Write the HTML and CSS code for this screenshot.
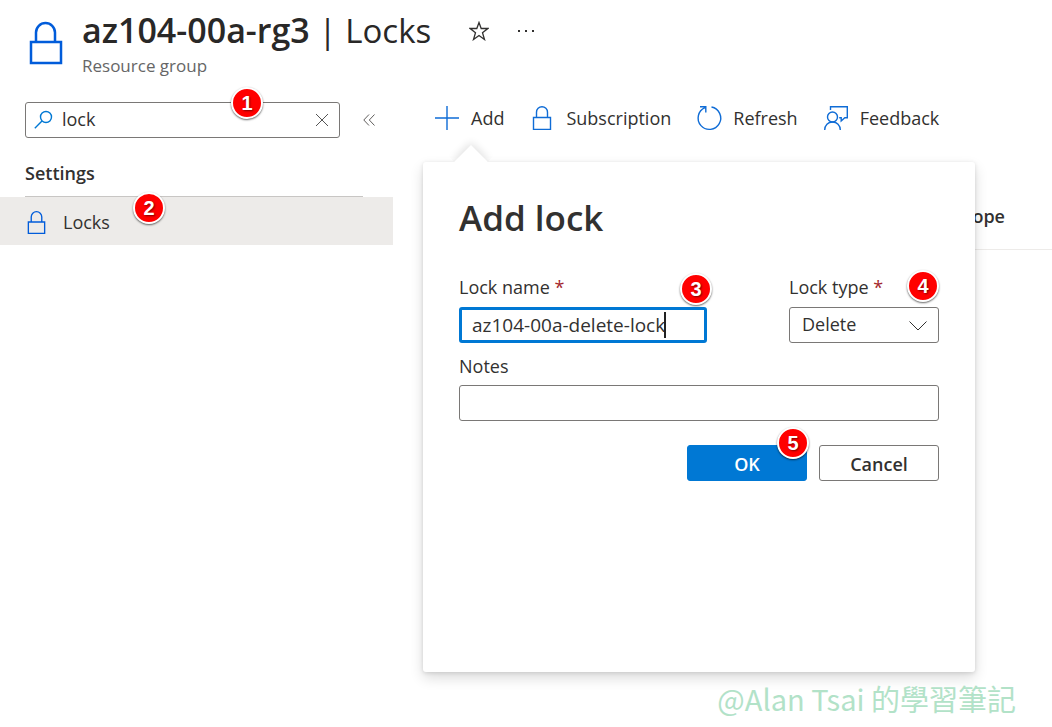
FILE: index.html
```html
<!DOCTYPE html>
<html lang="en">
<head>
<meta charset="utf-8">
<meta name="viewport" content="width=device-width, initial-scale=1">
<title>az104-00a-rg3 | Locks</title>
<link rel="stylesheet" href="styles.css">
</head>
<body>
<svg class="sprite" aria-hidden="true">
  <symbol id="lock" viewBox="0 0 24 24"><path d="M3.500 11.500h17v12h-17zM6.500 11V6.200a5.500 5.500 0 0 1 11 0V11"/></symbol>
</svg>
<div class="page">
  <header class="header">
    <svg class="header-icon" viewBox="0 0 34 44" aria-hidden="true"><path d="M2 21h30v21H2zM7 21V11.500a9.500 9.500 0 0 1 19 0V21"/></svg>
    <div class="heading">
      <div class="title-row">
        <h1 class="title">az104-00a-rg3 <span class="title-section">| Locks</span></h1>
        <button class="icon-button" type="button" aria-label="Add to favorites">
          <svg class="star" viewBox="0 0 20 20" aria-hidden="true"><path d="M10 1.500l2.200 6h6.600l-5.300 4.200 2 6.800-5.500-4-5.500 4 2-6.800L1.200 7.500h6.600z"/></svg>
        </button>
        <button class="icon-button more" type="button" aria-label="More">
          <svg class="dots" viewBox="0 0 18 4" aria-hidden="true"><path d="M1 1h2v2H1zM8 1h2v2H8zM15 1h2v2h-2z"/></svg>
        </button>
      </div>
      <p class="subtitle">Resource group</p>
    </div>
  </header>

  <div class="content">
    <nav class="sidebar" aria-label="Resource menu">
      <div class="search-row">
        <div class="search">
          <svg class="search-icon" viewBox="0 0 20 20" aria-hidden="true"><circle cx="12" cy="7" r="5.500"/><path d="M8 11L.8 18.200"/></svg>
          <input class="search-input" type="text" value="lock" aria-label="Search">
          <button class="clear" type="button" aria-label="Clear search"><svg viewBox="0 0 14 14" aria-hidden="true"><path d="M1 1l12 12M13 1L1 13"/></svg></button>
          <span class="badge badge-search">1</span>
        </div>
        <button class="collapse" type="button" aria-label="Collapse menu"><svg viewBox="0 0 12 12" aria-hidden="true"><path d="M6 .5L.8 6 6 11.500M11.500 .5L6.300 6l5.200 5.500"/></svg></button>
      </div>
      <h2 class="group-title">Settings</h2>
      <a class="nav-item" href="#locks" aria-current="page">
        <svg class="icon nav-icon" aria-hidden="true"><use href="#lock"/></svg>
        <span class="nav-label">Locks</span>
        <span class="badge badge-nav">2</span>
      </a>
    </nav>

    <main class="main">
      <div class="toolbar">
        <button class="command" type="button"><svg class="icon" viewBox="0 0 24 24" aria-hidden="true"><path d="M12 0v24M0 12h24"/></svg>Add</button>
        <button class="command" type="button"><svg class="icon" aria-hidden="true"><use href="#lock"/></svg>Subscription</button>
        <button class="command" type="button"><svg class="icon" viewBox="0 0 24 24" aria-hidden="true"><path d="M14.500 1A11.300 11.300 0 1 1 8 1.700M3 .8h5.800v5.700"/></svg>Refresh</button>
        <button class="command" type="button"><svg class="icon" viewBox="0 0 24 24" aria-hidden="true"><circle cx="8.500" cy="11" r="5"/><path d="M.7 24c0-4.700 3.400-8 7.800-8s7.800 3.300 7.800 8M6.500 4V.7h16.800v11h-2.500L17.200 15v-3.300h-2"/></svg>Feedback</button>
      </div>
      <table class="locks">
        <thead><tr><th class="scope" scope="col">Scope</th></tr></thead>
      </table>

      <form class="callout" aria-labelledby="callout-title">
        <h2 class="callout-title" id="callout-title">Add lock</h2>
        <div class="fields">
          <div class="field field-name">
            <label class="label" for="name">Lock name <span class="required">*</span></label>
            <div class="name-box">
              <input class="name-input" id="name" type="text" value="az104-00a-delete-lock" required>
              <span class="caret"></span>
            </div>
            <span class="badge badge-name">3</span>
          </div>
          <div class="field field-type">
            <label class="label" for="type">Lock type <span class="required">*</span></label>
            <div class="select-wrap">
              <select class="control select" id="type"><option>Delete</option><option>Read-only</option></select>
              <svg class="chevron" viewBox="0 0 18 10" aria-hidden="true"><path d="M.5 .5L9 9 17.500 .5"/></svg>
            </div>
            <span class="badge badge-type">4</span>
          </div>
        </div>
        <div class="field">
          <label class="label label-notes" for="notes">Notes</label>
          <input class="control" id="notes" type="text">
        </div>
        <div class="actions">
          <button class="button primary" type="button">OK<span class="badge badge-ok" aria-hidden="true">5</span></button>
          <button class="button" type="button">Cancel</button>
        </div>
      </form>
    </main>
  </div>
  <p class="watermark">@Alan Tsai 的學習筆記</p>
</div>
</body>
</html>
```
FILE: styles.css
```css
* { box-sizing: border-box; }
body {
  margin: 0;
  background: #fff;
  color: #323130;
  font: 18px/24px "Open Sans", "Noto Sans", sans-serif;
}
h1, h2, p { margin: 0; }
button, input, select { font: inherit; color: inherit; }
button { background: none; border: 0; padding: 0; }
input { outline: 0; }
svg { display: block; fill: none; stroke: currentColor; }
.sprite { position: absolute; width: 0; height: 0; }

.page { position: relative; min-height: 100vh; overflow: hidden; }

.header { display: flex; gap: 19px; padding: 8px 29px 0; height: 102px; }
.header-icon { width: 34px; height: 44px; margin-top: 13px; stroke: #015cda; stroke-width: 2.5; }
.title-row { display: flex; align-items: center; height: 44px; }
.title { font-size: 34px; line-height: 44px; font-weight: 600; color: #292827; white-space: nowrap; }
.title-section { font-size: 33px; font-weight: 400; }
.icon-button { display: flex; margin-left: 38px; padding-top: 2px; }
.more { margin-left: 28px; }
.star { width: 20px; height: 20px; stroke-width: 1.3; }
.dots { width: 18px; height: 4px; fill: currentColor; stroke: none; }
.subtitle { font-size: 17px; line-height: 28px; color: #666; }

.content { display: flex; }
.sidebar { flex: 0 0 393px; }
.search-row { display: flex; align-items: center; gap: 23px; padding-left: 25px; }
.search {
  position: relative;
  display: flex;
  align-items: center;
  gap: 8px;
  width: 315px;
  height: 36px;
  padding: 0 10px 0 8px;
  border: 1px solid #7a7876;
  border-radius: 3px;
}
.search-icon { flex: none; width: 20px; height: 20px; stroke: #0078d4; stroke-width: 1.4; }
.search-input { flex: 1; min-width: 0; border: 0; padding: 0 0 2px; background: none; }
.clear svg { width: 14px; height: 14px; stroke: #555; }
.collapse svg { width: 12px; height: 12px; stroke: #605e5c; }
.group-title {
  margin: 20px 30px 0 25px;
  padding-bottom: 8px;
  border-bottom: 1px solid #c8c6c4;
  font-size: 18px;
  line-height: 30px;
  font-weight: 600;
}
.nav-item {
  position: relative;
  display: flex;
  align-items: center;
  gap: 15px;
  height: 48px;
  padding: 2px 0 0 25px;
  background: #edebe9;
  color: #323130;
  text-decoration: none;
}
.icon { flex: none; width: 24px; height: 24px; stroke: #0f6cd6; stroke-width: 1.4; overflow: visible; }
.nav-icon { width: 23px; height: 23px; stroke: #015cda; }

.main { position: relative; flex: 1; min-width: 0; }
.toolbar { display: flex; align-items: center; gap: 26px; height: 32px; padding-left: 42px; }
.command { display: flex; align-items: center; gap: 12px; white-space: nowrap; }
.locks { width: calc(100% - 30px); margin: 49px 0 0 30px; border-collapse: collapse; }
.scope {
  height: 66px;
  padding: 0 47px 0 0;
  border-bottom: 1px solid #edebe9;
  text-align: right;
  font-weight: 600;
}

.callout {
  position: absolute;
  top: 60px;
  left: 30px;
  width: 552px;
  min-height: 510px;
  padding: 32px 36px;
  border-radius: 3px;
  background: #fff;
  box-shadow: 0 6px 14px rgba(0, 0, 0, .14), 0 1px 4px rgba(0, 0, 0, .12);
}
.callout::before {
  content: "";
  position: absolute;
  top: -12px;
  left: 36px;
  width: 24px;
  height: 24px;
  background: #fff;
  transform: rotate(45deg);
  box-shadow: -2px -2px 8px rgba(0, 0, 0, .12);
  clip-path: polygon(-12px -12px, 24px -12px, 24px 0, 0 24px, -12px 24px);
}
.callout-title { font-size: 35px; line-height: 48px; font-weight: 600; }
.fields { display: flex; justify-content: space-between; margin-top: 32px; }
.field { position: relative; }
.field-name { width: 248px; }
.field-type { width: 150px; }
.label { display: block; padding-bottom: 6px; line-height: 27px; }
.label-notes { padding-bottom: 5px; }
.required { color: #a4262c; }
.name-box {
  display: flex;
  align-items: center;
  height: 36px;
  padding-left: 10px;
  border: 3px solid #0078d4;
  border-radius: 3px;
  font-size: 19px;
}
.name-input { field-sizing: content; border: 0; padding: 0; background: none; }
.caret { width: 2px; height: 26px; margin-left: -1px; background: #222; }
.control {
  display: block;
  width: 100%;
  height: 36px;
  padding: 0 12px;
  border: 1px solid #7a7876;
  border-radius: 3px;
  background: #fff;
}
.select-wrap { position: relative; }
.select { appearance: none; padding-bottom: 2px; }
.chevron { position: absolute; top: 14px; right: 12px; width: 18px; height: 10px; pointer-events: none; }
.fields + .field { margin-top: 10px; }
.actions { display: flex; justify-content: flex-end; gap: 12px; margin-top: 24px; }
.button {
  position: relative;
  width: 120px;
  height: 36px;
  padding-top: 2px;
  border: 1px solid #7a7876;
  border-radius: 3px;
  font-weight: 600;
}
.primary { border-color: #0078d4; background: #0078d4; color: #fff; }

.badge {
  position: absolute;
  display: grid;
  place-items: center;
  width: 32px;
  height: 32px;
  border: 2px solid #fff;
  border-radius: 50%;
  background: #f00;
  color: #fff;
  font: bold 20px/28px "Liberation Sans", sans-serif;
  text-shadow: 1px 1px 2px rgba(0, 0, 0, .5);
  box-shadow: 0 1px 2px rgba(0, 0, 0, .6);
}
.badge-search { top: -16px; left: 205px; }
.badge-nav { top: -5px; left: 133px; }
.badge-name { top: -1px; right: -5px; }
.badge-type { top: -4px; right: 0; }
.badge-ok { top: -19px; right: -3px; }

.watermark {
  position: absolute;
  right: 36px;
  bottom: 9px;
  font: 29px/40px "Noto Sans CJK TC", sans-serif;
  color: #b2e2c8;
}
```
